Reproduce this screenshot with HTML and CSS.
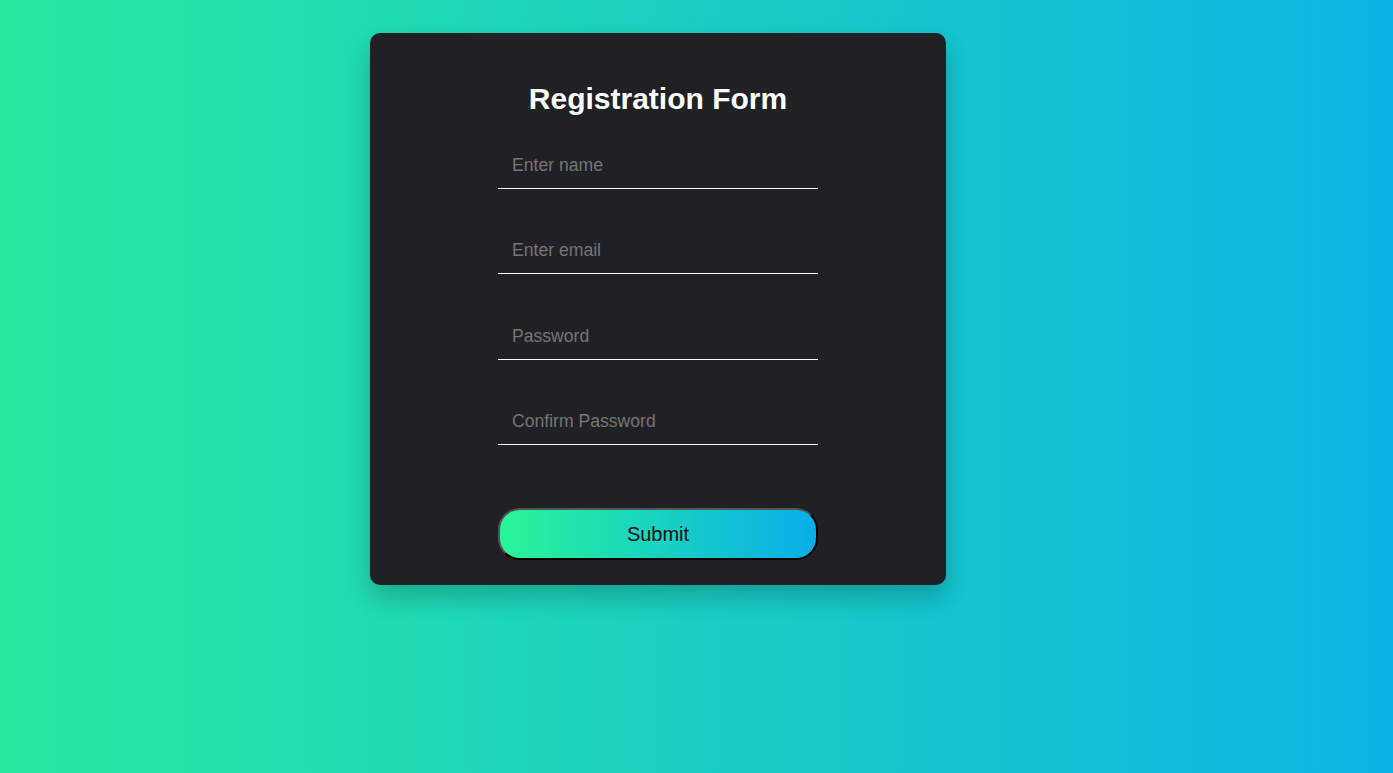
FILE: index.html
```html
<!DOCTYPE html>
<html lang="en">
<head>
<meta charset="utf-8">
<title>Registration Form</title>
<link rel="stylesheet" href="styles.css">
</head>
<body>
<div class="card">
  <h2 class="title">Registration Form</h2>
  <form class="form">
    <input class="field" type="text" placeholder="Enter name">
    <input class="field" type="email" placeholder="Enter email">
    <input class="field" type="password" placeholder="Password">
    <input class="field" type="password" placeholder="Confirm Password">
    <button class="submit" type="button">Submit</button>
  </form>
</div>
</body>
</html>
```

FILE: styles.css
```css
html, body {
  margin: 0;
  padding: 0;
  height: 100%;
}
body {
  background: linear-gradient(90deg, #29e9a0 0%, #0bb4e4 100%);
  font-family: "Liberation Sans", Arial, sans-serif;
  padding: 33px 0 0 370px;
  box-sizing: border-box;
}
.card {
  width: 576px;
  height: 552px;
  box-sizing: border-box;
  background: #202125;
  border-radius: 10px;
  box-shadow: 0 12px 24px rgba(0, 0, 0, 0.22);
  padding-top: 49px;
  display: flex;
  flex-direction: column;
  align-items: center;
}
.title {
  margin: 0 0 27px;
  color: #ffffff;
  font-size: 30px;
  font-weight: 700;
  line-height: 34px;
}
.form {
  width: 320px;
  display: flex;
  flex-direction: column;
}
.field {
  width: 100%;
  box-sizing: border-box;
  height: 45.5px;
  margin: 0 0 40px;
  padding: 0 14px;
  background: transparent;
  border: none;
  border-bottom: 1px solid #ffffff;
  color: #ffffff;
  font-family: "Liberation Sans", Arial, sans-serif;
  font-size: 17.6px;
  outline: none;
}
.field::placeholder {
  color: #757575;
}
.field:last-of-type {
  margin-bottom: 63px;
}
.submit {
  width: 100%;
  height: 52px;
  border: 2px outset #555;
  border-radius: 22px;
  background: linear-gradient(90deg, #2af598 0%, #08aeea 100%);
  color: #111;
  font-family: "Liberation Sans", Arial, sans-serif;
  font-size: 20px;
  cursor: pointer;
}
```
